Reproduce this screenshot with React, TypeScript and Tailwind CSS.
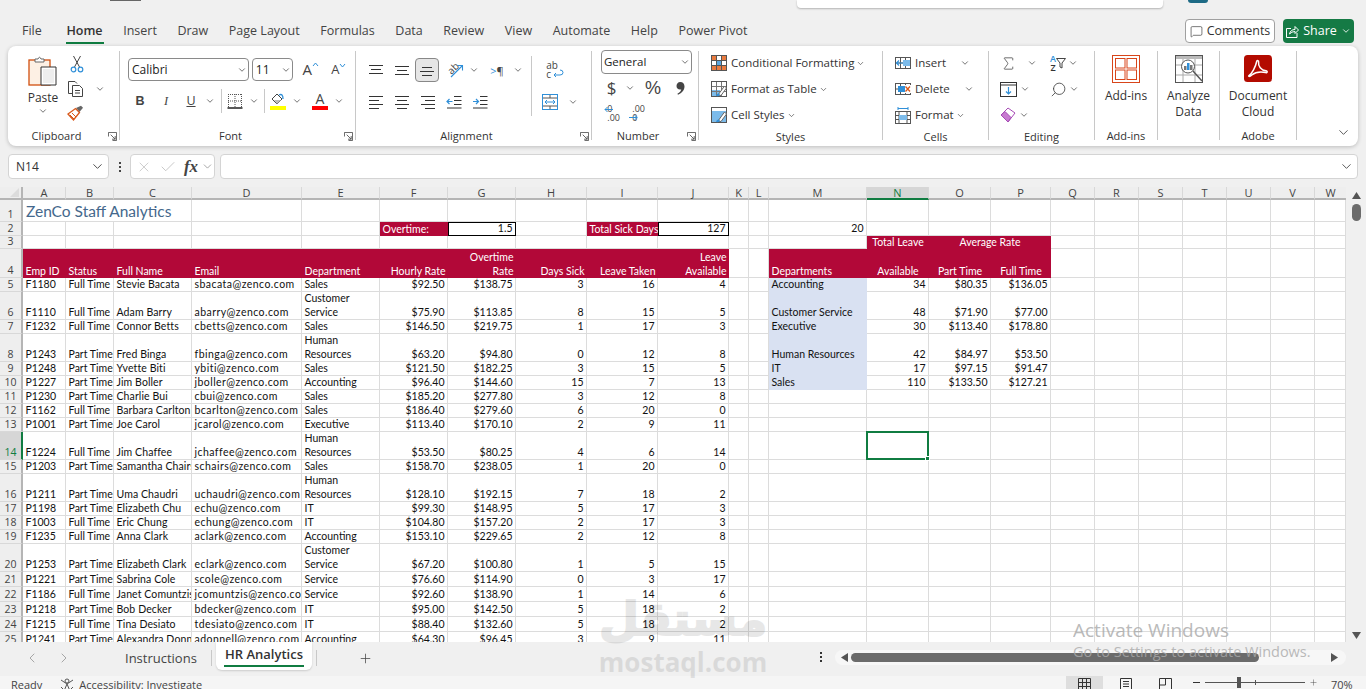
import { ChevronDown, ChevronLeft, ChevronRight, Check, Plus, X, MessageSquare, Search, Sigma } from 'lucide-react'

type CellSpec = { t?: string; right?: boolean; center?: boolean; fill?: 'red' | 'blue'; box?: boolean; span?: string; selected?: boolean; track?: string }

const COLS = 'ABCDEFGHIJKLMNOPQRSTUVW'.split('')
const ROW_NUMS = Array.from({ length: 25 }, (_, i) => i + 1)

// name, status, id etc. in sheet order, from row 5 down
const STAFF: [string, string, string, string, string, string, string, string, string, string][] = [
  ['F1180', 'Full Time', 'Stevie Bacata', 'sbacata@zenco.com', 'Sales', '$92.50', '$138.75', '3', '16', '4'],
  ['F1110', 'Full Time', 'Adam Barry', 'abarry@zenco.com', 'Customer\nService', '$75.90', '$113.85', '8', '15', '5'],
  ['F1232', 'Full Time', 'Connor Betts', 'cbetts@zenco.com', 'Sales', '$146.50', '$219.75', '1', '17', '3'],
  ['P1243', 'Part Time', 'Fred Binga', 'fbinga@zenco.com', 'Human\nResources', '$63.20', '$94.80', '0', '12', '8'],
  ['P1248', 'Part Time', 'Yvette Biti', 'ybiti@zenco.com', 'Sales', '$121.50', '$182.25', '3', '15', '5'],
  ['P1227', 'Part Time', 'Jim Boller', 'jboller@zenco.com', 'Accounting', '$96.40', '$144.60', '15', '7', '13'],
  ['P1230', 'Part Time', 'Charlie Bui', 'cbui@zenco.com', 'Sales', '$185.20', '$277.80', '3', '12', '8'],
  ['F1162', 'Full Time', 'Barbara Carlton', 'bcarlton@zenco.com', 'Sales', '$186.40', '$279.60', '6', '20', '0'],
  ['P1001', 'Part Time', 'Joe Carol', 'jcarol@zenco.com', 'Executive', '$113.40', '$170.10', '2', '9', '11'],
  ['F1224', 'Full Time', 'Jim Chaffee', 'jchaffee@zenco.com', 'Human\nResources', '$53.50', '$80.25', '4', '6', '14'],
  ['P1203', 'Part Time', 'Samantha Chairs', 'schairs@zenco.com', 'Sales', '$158.70', '$238.05', '1', '20', '0'],
  ['P1211', 'Part Time', 'Uma Chaudri', 'uchaudri@zenco.com', 'Human\nResources', '$128.10', '$192.15', '7', '18', '2'],
  ['P1198', 'Part Time', 'Elizabeth Chu', 'echu@zenco.com', 'IT', '$99.30', '$148.95', '5', '17', '3'],
  ['F1003', 'Full Time', 'Eric Chung', 'echung@zenco.com', 'IT', '$104.80', '$157.20', '2', '17', '3'],
  ['F1235', 'Full Time', 'Anna Clark', 'aclark@zenco.com', 'Accounting', '$153.10', '$229.65', '2', '12', '8'],
  ['P1253', 'Part Time', 'Elizabeth Clark', 'eclark@zenco.com', 'Customer\nService', '$67.20', '$100.80', '1', '5', '15'],
  ['P1221', 'Part Time', 'Sabrina Cole', 'scole@zenco.com', 'Service', '$76.60', '$114.90', '0', '3', '17'],
  ['F1186', 'Full Time', 'Janet Comuntzis', 'jcomuntzis@zenco.com', 'Service', '$92.60', '$138.90', '1', '14', '6'],
  ['P1218', 'Part Time', 'Bob Decker', 'bdecker@zenco.com', 'IT', '$95.00', '$142.50', '5', '18', '2'],
  ['F1215', 'Full Time', 'Tina Desiato', 'tdesiato@zenco.com', 'IT', '$88.40', '$132.60', '5', '18', '2'],
  ['P1241', 'Part Time', 'Alexandra Donnell', 'adonnell@zenco.com', 'Accounting', '$64.30', '$96.45', '3', '9', '11'],
]

const DEPTS: [string, string, string, string][] = [
  ['Accounting', '34', '$80.35', '$136.05'],
  ['Customer Service', '48', '$71.90', '$77.00'],
  ['Executive', '30', '$113.40', '$178.80'],
  ['Human Resources', '42', '$84.97', '$53.50'],
  ['IT', '17', '$97.15', '$91.47'],
  ['Sales', '110', '$133.50', '$127.21'],
]

const HEAD_4: Record<string, CellSpec> = {
  A: { t: 'Emp ID' }, B: { t: 'Status' }, C: { t: 'Full Name' }, D: { t: 'Email' }, E: { t: 'Department' },
  F: { t: 'Hourly Rate', right: true }, G: { t: 'Overtime\nRate', right: true }, H: { t: 'Days Sick', right: true },
  I: { t: 'Leave Taken', right: true }, J: { t: 'Leave\nAvailable', right: true },
}

function cellAt(col: string, row: number): CellSpec | null {
  if (row === 1 && col === 'A') return { t: 'ZenCo Staff Analytics', span: 'title' }
  if (row === 1 && (col === 'B' || col === 'C')) return null
  if (row === 2) {
    if (col === 'F') return { t: 'Overtime:', fill: 'red' }
    if (col === 'G') return { t: '1.5', right: true, box: true }
    if (col === 'I') return { t: 'Total Sick Days', fill: 'red' }
    if (col === 'J') return { t: '127', right: true, box: true }
    if (col === 'M') return { t: '20', right: true }
  }
  if (row === 3) {
    if (col === 'N') return { t: 'Total Leave', fill: 'red', center: true }
    if (col === 'O') return { t: 'Average Rate', fill: 'red', center: true, span: 'two' }
    if (col === 'P') return null
  }
  if (row === 4) {
    if (HEAD_4[col]) return { ...HEAD_4[col], fill: 'red' }
    if (col === 'M') return { t: 'Departments', fill: 'red' }
    if (col === 'N') return { t: 'Available', fill: 'red', center: true }
    if (col === 'O') return { t: 'Part Time', fill: 'red', center: true }
    if (col === 'P') return { t: 'Full Time', fill: 'red', center: true }
  }
  if (row >= 5) {
    const ci = COLS.indexOf(col)
    if (ci < 10) {
      return { t: STAFF[row - 5][ci], right: ci >= 5, track: ci === 3 ? 'tracking-[0.45px]' : ci === 2 ? 'tracking-[0.1px]' : '' }
    }
    const dept = DEPTS[row - 5]
    if (dept) {
      if (col === 'M') return { t: dept[0], fill: 'blue' }
      if (col === 'N') return { t: dept[1], right: true }
      if (col === 'O') return { t: dept[2], right: true }
      if (col === 'P') return { t: dept[3], right: true }
    }
    if (col === 'N' && row === 14) return { selected: true }
  }
  return {}
}

function Cell({ spec }: { spec: CellSpec }) {
  const isTitle = spec.span === 'title'
  return (
    <div
      className={`relative flex overflow-hidden whitespace-pre leading-[14px] font-['Lato',sans-serif] ${
        isTitle ? 'col-span-3 items-center border-r border-b border-[#dcdcdc] pl-[3px] text-[15.5px] text-[#44688c]' : 'items-end px-[2.5px] text-[10.5px]'
      } ${spec.span === 'two' ? 'col-span-2' : ''} ${spec.right ? 'justify-end text-right' : ''} ${spec.center ? 'justify-center text-center' : ''} ${
        spec.fill === 'red'
          ? 'bg-[#b20838] text-white'
          : spec.fill === 'blue'
            ? 'border-b border-[#d9e1f2] bg-[#d9e1f2] text-[#111]'
            : spec.box
              ? 'z-10 border border-black bg-white text-[#111]'
              : isTitle
                ? ''
                : 'border-r border-b border-[#dcdcdc] text-[#111]'
      } ${spec.track ?? ''} ${spec.selected ? '!overflow-visible' : ''}`}
    >
      {spec.t}
      {spec.selected && (
        <span className="absolute -top-px -right-px -bottom-px -left-px z-20 border-2 border-[#107c41]">
          <span className="absolute -right-[3px] -bottom-[3px] h-[5px] w-[5px] border border-white bg-[#107c41]" />
        </span>
      )}
    </div>
  )
}

function Sheet() {
  return (
    <div className="grid h-[455px] w-[1346px] grid-cols-[23px_43px_48px_78px_110px_78px_68px_68px_71px_71px_71px_20px_20px_98px_62px_62px_60px_44px_44px_44px_44px_44px_44px_31px] grid-rows-[13px_22px_14px_13px_29px_14px_28px_14px_28px_14px_14px_14px_14px_14px_28px_14px_28px_14px_14px_14px_28px_15px_15px_15px_15px_15px] overflow-hidden bg-white">
      <div className="flex items-center justify-end border-r-2 border-b-2 border-[#b5b5b5] bg-[#eeeeee] pr-[2px]">
        <svg width="9" height="9" viewBox="0 0 9 9"><path d="M9 0V9H0Z" fill="#dcdcdc" /></svg>
      </div>
      {COLS.map((c) => (
        <div
          key={c}
          className={`flex items-center justify-center border-b-2 text-[11px] leading-none ${
            c === 'N' ? 'border-[#107c41] bg-[#d6d6d6] text-[#107c41]' : 'border-[#b5b5b5] bg-[#eeeeee] text-[#444]'
          } ${c === 'W' ? '' : 'border-r border-r-[#d8d8d8]'}`}
        >
          {c}
        </div>
      ))}
      {ROW_NUMS.flatMap((r) => [
        <div
          key={`h${r}`}
          className={`flex items-end justify-center border-b border-b-[#d8d8d8] text-[10.5px] leading-[14px] ${
            r === 14 ? 'border-r-2 border-r-[#107c41] bg-[#d6d6d6] text-[#107c41]' : 'border-r-2 border-r-[#b5b5b5] bg-[#eeeeee] text-[#444]'
          }`}
        >
          {r}
        </div>,
        ...COLS.map((c) => {
          const spec = cellAt(c, r)
          return spec ? <Cell key={`${c}${r}`} spec={spec} /> : null
        }),
      ])}
    </div>
  )
}

function Chev({ size = 10 }: { size?: number }) {
  return <ChevronDown size={size} strokeWidth={1.8} className="shrink-0 text-[#444]" />
}

function InlineChev() {
  return <ChevronDown size={9} strokeWidth={1.8} className="-ml-[2px] shrink-0 text-[#444]" />
}

function Launcher() {
  return (
    <svg width="9" height="9" viewBox="0 0 10 10" className="absolute top-[6px] right-[2px]" fill="none" stroke="#555">
      <path d="M.5 5V.5H9.5V9.5H5" />
      <path d="M3 3 8 8M8 4.5V8H4.5" />
    </svg>
  )
}

function Group({ w, label, launcher, children }: { w: string; label?: string; launcher?: boolean; children: React.ReactNode }) {
  return (
    <div className={`flex h-full ${w}`}>
      <div className="flex min-w-0 flex-1 flex-col">
        <div className="flex-1">{children}</div>
        <div className={`relative flex h-[20px] items-center justify-center pt-[1px] text-[11px] text-[#333] ${launcher ? 'pr-[14px]' : ''}`}>
          {label}
          {launcher && <Launcher />}
        </div>
      </div>
      <span className="mt-[5px] mb-[6px] w-px bg-[#c8c8c8]" />
    </div>
  )
}

function Sep({ className = '' }: { className?: string }) {
  return <span className={`w-px self-stretch bg-[#c8c8c8] ${className}`} />
}

function Lines({ rows }: { rows: [number, number, number][] }) {
  return (
    <svg width="16" height="14" viewBox="0 0 16 14" stroke="#333">
      {rows.map(([a, b, y]) => (
        <line key={y} x1={a} x2={b} y1={y + 0.5} y2={y + 0.5} />
      ))}
    </svg>
  )
}

function PasteIcon() {
  return (
    <svg width="30" height="32" viewBox="0 0 30 32" fill="none">
      <rect x="1" y="5" width="21" height="25" fill="#fdf0e4" stroke="#d24f0f" strokeWidth="1.3" />
      <path d="M7 7V4H10Q11.5 .5 13 4H16V7Z" fill="#fff" stroke="#666" />
      <path d="M13 12H28V30H13Z" fill="#fff" stroke="#333" />
      <path d="M15 14H26V28H15Z" fill="#eeeeee" />
    </svg>
  )
}

function ScissorsIcon() {
  return (
    <svg width="14" height="18" viewBox="0 0 14 18" fill="none">
      <path d="M3.5 1 9.5 12M10.5 1 4.5 12" stroke="#444" />
      <circle cx="3.5" cy="14.5" r="2.3" stroke="#2f8fd8" strokeWidth="1.2" />
      <circle cx="10.5" cy="14.5" r="2.3" stroke="#2f8fd8" strokeWidth="1.2" />
    </svg>
  )
}

function CopyIcon() {
  return (
    <svg width="18" height="18" viewBox="0 0 18 18" fill="none" stroke="#444">
      <path d="M5 13.5H1.5V1.5H8L10 3.5" />
      <path d="M5.5 5.5H12.5L15.5 8.5V16.5H5.5Z" fill="#fff" />
      <path d="M8 10.5H13M8 13H13" />
    </svg>
  )
}

function BrushIcon() {
  return (
    <svg width="17" height="16" viewBox="0 0 17 16" fill="none">
      <path d="M9 3 14 0.8 16 2.8 12.5 7Z" fill="#666" />
      <path d="M1 9 8.5 3.5 12.5 7.5 6.5 15Z" fill="#fff" stroke="#d8581a" strokeWidth="1.3" />
      <path d="M3 10 7 14M5 8 9 12" stroke="#d8581a" />
    </svg>
  )
}

function BordersIcon() {
  return (
    <svg width="16" height="16" viewBox="0 0 16 16" fill="none">
      <path d="M1 1.5H15M1 8H15M1.5 1V14M8 1V14M14.5 1V14" stroke="#555" strokeDasharray="1 1" />
      <path d="M.5 15H15.5" stroke="#111" strokeWidth="1.4" />
    </svg>
  )
}

function FillIcon() {
  return (
    <svg width="16" height="18" viewBox="0 0 16 18" fill="none">
      <path d="M2 7 7 2 12 7 7 12Z" stroke="#444" />
      <path d="M4 8H11L7 12Z" fill="#bbb" />
      <path d="M9 3Q13 1 13 7" stroke="#2f8fd8" strokeWidth="1.3" />
      <rect y="14" width="16" height="4" fill="#ffff00" />
    </svg>
  )
}

function OrientIcon() {
  return (
    <span className="relative flex h-[18px] w-[18px] items-center justify-center">
      <span className="-mt-[5px] -ml-[4px] -rotate-45 text-[10px] leading-none text-[#444]">ab</span>
      <svg width="18" height="18" viewBox="0 0 18 18" fill="none" className="absolute inset-0">
        <path d="M5 16 16 5M11.5 4.5H16.5V9.5" stroke="#2f8fd8" strokeWidth="1.1" />
      </svg>
    </span>
  )
}

function IndentIcon({ dir }: { dir: 'out' | 'in' }) {
  return (
    <svg width="16" height="14" viewBox="0 0 16 14" fill="none">
      <path d="M8 1.5H15.5M8 5.5H15.5M8 9.5H15.5M1 13H15.5" stroke="#333" />
      {dir === 'out' ? (
        <path d="M6.5 6.5H1M3.5 4 1 6.5 3.5 9" stroke="#2f8fd8" strokeWidth="1.2" />
      ) : (
        <path d="M1 6.5H6.5M4 4 6.5 6.5 4 9" stroke="#2f8fd8" strokeWidth="1.2" />
      )}
    </svg>
  )
}

function MergeIcon() {
  return (
    <svg width="16" height="16" viewBox="0 0 16 16" fill="none">
      <rect x=".5" y=".5" width="15" height="15" stroke="#2f8fd8" />
      <path d="M1 4H15M1 12H15M8 1V4M8 12V15" stroke="#555" />
      <path d="M3 8H13M5 6 3 8 5 10M11 6 13 8 11 10" stroke="#2f8fd8" />
    </svg>
  )
}

function CommaIcon() {
  return (
    <svg width="9" height="13" viewBox="0 0 9 13">
      <path d="M4.2 0C7 0 8.5 2 8.5 4.5 8.5 8 6 11 2 12.8L1.4 11.8C3.8 10.3 5 8.8 5.3 7.4 2.5 8.2.5 6.3.5 4 .5 1.7 2 0 4.2 0Z" fill="#444" />
    </svg>
  )
}

function CondIcon() {
  return (
    <svg width="16" height="16" viewBox="0 0 16 16" fill="none">
      <rect x=".5" y=".5" width="15" height="15" stroke="#555" />
      <rect x="1" y="1" width="4" height="4" fill="#e97b3f" />
      <rect x="11" y="1" width="4" height="4" fill="#e97b3f" />
      <rect x="1" y="11" width="14" height="4" fill="#e97b3f" />
      <rect x="5" y="5.5" width="5" height="5" fill="#5aa7e0" />
      <path d="M5.5 1V15M10.5 1V15M1 5.5H15M1 10.5H15" stroke="#555" />
    </svg>
  )
}

function TableIcon({ filled }: { filled?: boolean }) {
  return (
    <svg width="16" height="16" viewBox="0 0 16 16" fill="none">
      <rect x=".5" y=".5" width="15" height="15" stroke="#555" />
      {filled ? <rect x="1" y="4" width="14" height="11" fill="#7cbbea" /> : <rect x="1" y="9" width="8" height="6" fill="#7cbbea" />}
      {!filled && <path d="M5.5 1V15M10.5 1V15M1 5.5H15M1 10.5H15" stroke="#777" />}
      <path d="M7 14 13.5 5 15.5 7 10 14.5Z" fill="#fff" stroke="#666" />
      <path d="M5 15Q5.5 12 8 12.5L9 14Q8 15.5 5 15Z" fill="#2f8fd8" />
    </svg>
  )
}

function InsertIcon() {
  return (
    <svg width="16" height="16" viewBox="0 0 16 16" fill="none">
      <rect x=".5" y="2.5" width="15" height="11" stroke="#555" />
      <path d="M5.5 2V14M10.5 2V14M1 8H15" stroke="#555" />
      <rect x="8" y="5" width="7" height="6" fill="#7cbbea" />
      <path d="M8 8H1.5M4 5.5 1.5 8 4 10.5" stroke="#2f8fd8" strokeWidth="1.2" />
    </svg>
  )
}

function DeleteIcon() {
  return (
    <svg width="16" height="16" viewBox="0 0 16 16" fill="none">
      <rect x=".5" y="2.5" width="15" height="11" stroke="#555" />
      <path d="M5.5 2V14M10.5 2V14M1 8H15" stroke="#555" />
      <rect x="3" y="5" width="7" height="6" fill="#2f8fd8" />
      <rect x="10" y="4" width="6" height="8" fill="#fff" />
      <path d="M10.5 5.5 15 10.5M15 5.5 10.5 10.5" stroke="#d8581a" strokeWidth="1.3" />
    </svg>
  )
}

function FormatIcon() {
  return (
    <svg width="16" height="17" viewBox="0 0 16 17" fill="none">
      <path d="M3 1.5H13M3 0V3M13 0V3" stroke="#2f8fd8" />
      <rect x=".5" y="4.5" width="15" height="12" stroke="#555" />
      <path d="M1 8.5H15M1 12.5H15M4 5V16M12 5V16" stroke="#555" />
      <rect x="4" y="8" width="8" height="5" fill="#7cbbea" />
    </svg>
  )
}

function FillDownIcon() {
  return (
    <svg width="17" height="15" viewBox="0 0 17 15" fill="none">
      <rect x=".5" y=".5" width="16" height="14" stroke="#333" />
      <path d="M1 3H16" stroke="#333" />
      <path d="M8.5 5V12M6 9.5 8.5 12 11 9.5" stroke="#2f8fd8" strokeWidth="1.2" />
    </svg>
  )
}

function EraserIcon() {
  return (
    <svg width="16" height="16" viewBox="0 0 16 16" fill="none">
      <path d="M1 8 8 1 15 6 8 15Z" fill="#fff" stroke="#a64ab5" />
      <path d="M1 8 5 4.5 11 10.5 8 15Z" fill="#c77bd0" stroke="#a64ab5" />
    </svg>
  )
}

function SortIcon() {
  return (
    <span className="flex items-center">
      <span className="flex flex-col text-center text-[9px] font-semibold leading-[9px]">
        <span className="text-[#2f8fd8]">A</span>
        <span className="text-[#333]">Z</span>
      </span>
      <svg width="10" height="11" viewBox="0 0 10 11" fill="none" stroke="#444">
        <path d="M.5 .5H9.5L6 5V10L4 9V5Z" />
      </svg>
    </span>
  )
}

function AddInsIcon() {
  return (
    <svg width="28" height="28" viewBox="0 0 28 28" fill="none" stroke="#d8451a">
      <rect x=".5" y=".5" width="27" height="27" />
      <rect x="3.5" y="3.5" width="9.5" height="9.5" />
      <rect x="15" y="3.5" width="9.5" height="9.5" />
      <rect x="3.5" y="15" width="9.5" height="9.5" />
      <rect x="15" y="15" width="9.5" height="9.5" />
    </svg>
  )
}

function AnalyzeIcon() {
  return (
    <svg width="28" height="28" viewBox="0 0 28 28" fill="none">
      <rect x=".5" y=".5" width="27" height="27" stroke="#555" />
      <rect x="1" y="1" width="26" height="3" fill="#bbb" />
      <path d="M1 10H27M1 20H27M8 4V27M20 4V27" stroke="#aaa" />
      <circle cx="13" cy="11.5" r="6.5" fill="#fff" stroke="#555" />
      <path d="M18 16 27 26" stroke="#555" strokeWidth="1.4" />
      <rect x="9" y="11" width="2.5" height="4" fill="#777" />
      <rect x="12" y="8" width="2.5" height="7" fill="#2f8fd8" />
      <rect x="15" y="10" width="2.5" height="5" fill="#777" />
    </svg>
  )
}

function PdfIcon() {
  return (
    <svg width="28" height="27" viewBox="0 0 28 27">
      <rect width="28" height="27" rx="3.5" fill="#b30b00" />
      <path
        d="M5 20.5C8 18.5 11.5 12 12.7 6.5 13 5 15 5.5 14.6 7.2 14 11 17 15.2 22 15.8 23.8 16 23.5 18 21.6 17.6 16 16.5 11 17.5 7.8 20 5.8 22 3.8 21.5 5 20.5Z"
        fill="none"
        stroke="#fff"
        strokeWidth="1.5"
      />
    </svg>
  )
}

function Ribbon() {
  return (
    <div className="mx-[8px] flex h-[100px] w-[1350px] rounded-lg bg-white shadow-[0_1px_4px_rgba(0,0,0,0.22)]">
      <Group w="w-[112px]" label="Clipboard" launcher>
        <div className="flex pt-[9px] pl-[19px]">
          <div className="flex w-[32px] flex-col items-center">
            <PasteIcon />
            <span className="mt-[3px] text-[12px] leading-[16px] text-[#333]">Paste</span>
            <span><Chev /></span>
          </div>
          <div className="ml-[8px] flex flex-col items-start gap-[7px]">
            <span className="ml-[3px]"><ScissorsIcon /></span>
            <span className="flex items-center gap-[10px]"><CopyIcon /><Chev /></span>
            <span><BrushIcon /></span>
          </div>
        </div>
      </Group>
      <Group w="w-[236px]" label="Font" launcher>
        <div className="mt-[12px] flex h-[23px] items-center gap-[3px] pl-[8px]">
          <span className="flex h-[23px] w-[122px] items-center justify-between rounded border border-[#8a8a8a] pr-[1px] pl-[3px] text-[12px] text-[#222]">Calibri<Chev /></span>
          <span className="flex h-[23px] w-[42px] items-center justify-between rounded border border-[#8a8a8a] pr-[1px] pl-[3px] text-[12px] text-[#222]">11<Chev /></span>
          <span className="ml-[6px] flex w-[24px] items-start text-[15px] leading-none text-[#444]">A<svg width="7" height="5" viewBox="0 0 7 5" fill="none" stroke="#2f8fd8"><path d="M1 4 3.5 1 6 4" /></svg></span>
          <span className="ml-[2px] flex w-[24px] items-start text-[13px] leading-none text-[#444]">A<svg width="7" height="5" viewBox="0 0 7 5" fill="none" stroke="#2f8fd8"><path d="M1 1 3.5 4 6 1" /></svg></span>
        </div>
        <div className="mt-[8px] flex h-[24px] items-center pl-[7px] text-[#444]">
          <span className="w-[26px] text-center text-[12.5px] font-bold font-['Liberation_Sans',sans-serif]">B</span>
          <span className="w-[26px] text-center text-[12.5px] italic font-['Liberation_Serif',serif]">I</span>
          <span className="w-[24px] text-center text-[12.5px] underline">U</span>
          <span className="flex w-[14px] justify-center"><Chev /></span>
          <Sep className="ml-[4px]" />
          <span className="flex w-[26px] justify-center"><BordersIcon /></span>
          <span className="flex w-[12px] justify-center"><Chev /></span>
          <Sep className="ml-[4px]" />
          <span className="flex w-[26px] justify-center"><FillIcon /></span>
          <span className="flex w-[12px] justify-center"><Chev /></span>
          <span className="ml-[5px] flex h-[18px] w-[24px] flex-col items-center"><span className="text-[14px] leading-[14px] text-[#444]">A</span><span className="h-[4px] w-[16px] bg-[#ff0000]" /></span>
          <span className="flex w-[14px] justify-center"><Chev /></span>
        </div>
      </Group>
      <Group w="w-[236px]" label="Alignment" launcher>
        <div className="flex h-[80px]">
          <div className="pl-[7px]">
            <div className="mt-[12px] flex h-[24px] items-center">
              <span className="flex w-[26px] justify-center"><Lines rows={[[1, 15, 2], [3, 13, 6], [1, 15, 10]]} /></span>
              <span className="flex w-[26px] justify-center"><Lines rows={[[1, 15, 3], [3, 13, 7], [1, 15, 11]]} /></span>
              <span className="flex h-[24px] w-[24px] items-center justify-center rounded border border-[#888] bg-[#e6e6e6]"><Lines rows={[[3, 13, 4], [1, 15, 8], [3, 13, 12]]} /></span>
              <span className="ml-[3px] flex w-[26px] justify-center"><OrientIcon /></span>
              <span className="flex w-[12px] justify-center"><Chev /></span>
              <span className="ml-[4px] flex w-[26px] justify-center text-[11px] leading-none text-[#444]"><span className="text-[#2f8fd8]">&gt;</span>¶</span>
              <span className="flex w-[16px] justify-center"><Chev /></span>
            </div>
            <div className="mt-[8px] flex h-[24px] items-center">
              <span className="flex w-[26px] justify-center"><Lines rows={[[1, 15, 1], [1, 11, 5], [1, 15, 9], [1, 11, 13]]} /></span>
              <span className="flex w-[26px] justify-center"><Lines rows={[[1, 15, 1], [3, 13, 5], [1, 15, 9], [3, 13, 13]]} /></span>
              <span className="flex w-[26px] justify-center"><Lines rows={[[1, 15, 1], [5, 15, 5], [1, 15, 9], [5, 15, 13]]} /></span>
              <span className="flex w-[26px] justify-center"><IndentIcon dir="out" /></span>
              <span className="flex w-[26px] justify-center"><IndentIcon dir="in" /></span>
            </div>
          </div>
          <Sep className="mt-[10px] mb-[10px] ml-[5px]" />
          <div className="pl-[10px]">
            <div className="mt-[12px] flex h-[24px] w-[20px] items-center justify-center">
              <span className="relative text-[10px] leading-[9px] text-[#444]">ab<br />c<svg className="absolute top-[8px] left-[7px]" width="11" height="9" viewBox="0 0 11 9" fill="none" stroke="#2f8fd8"><path d="M1 6H7Q10 6 10 3.5T7 1M3 4 1 6 3 8" /></svg></span>
            </div>
            <div className="mt-[8px] flex h-[24px] items-center">
              <MergeIcon />
              <span className="ml-[10px]"><Chev /></span>
            </div>
          </div>
        </div>
      </Group>
      <Group w="w-[107px]" label="Number" launcher>
        <div className="pl-[9px]">
          <span className="mt-[4px] flex h-[24px] w-[91px] items-center justify-between rounded border border-[#8a8a8a] pr-[1px] pl-[2px] text-[11.5px] text-[#222]">General<Chev /></span>
          <div className="mt-[2px] flex h-[24px] items-center text-[#444]">
            <span className="w-[21px] text-center text-[17px]">$</span>
            <span className="flex w-[16px] justify-center"><Chev /></span>
            <span className="ml-[3px] w-[24px] text-center text-[18px] font-['Liberation_Sans',sans-serif]">%</span>
            <span className="ml-[3px] flex w-[24px] justify-center"><CommaIcon /></span>
          </div>
          <div className="flex items-center gap-[9px] pt-[5px] pl-[3px]">
            <span className="relative flex h-[17px] w-[16px] flex-col items-end text-[9px] leading-[8.5px] text-[#444]">0<br />.00<svg className="absolute top-[1px] left-0" width="9" height="7" viewBox="0 0 9 7" fill="none" stroke="#2f8fd8"><path d="M9 3.5H1M3.5 1 1 3.5 3.5 6" /></svg></span>
            <span className="relative flex h-[17px] w-[16px] flex-col items-end text-[9px] leading-[8.5px] text-[#444]">.00<br />0<svg className="absolute bottom-[1px] left-0" width="9" height="7" viewBox="0 0 9 7" fill="none" stroke="#2f8fd8"><path d="M0 3.5H8M5.5 1 8 3.5 5.5 6" /></svg></span>
          </div>
        </div>
      </Group>
      <Group w="w-[184px]" label="Styles">
        <div className="flex flex-col pt-[4px] pl-[12px] text-[11.5px] text-[#333]">
          <span className="flex h-[26px] items-center gap-[4px]"><CondIcon />Conditional Formatting<InlineChev /></span>
          <span className="flex h-[26px] items-center gap-[4px]"><TableIcon />Format as Table<InlineChev /></span>
          <span className="flex h-[26px] items-center gap-[4px]"><TableIcon filled />Cell Styles<InlineChev /></span>
        </div>
      </Group>
      <Group w="w-[106px]" label="Cells">
        <div className="flex flex-col pt-[4px] pl-[12px] text-[11.5px] text-[#333]">
          <span className="flex h-[26px] w-[75px] items-center gap-[4px]"><InsertIcon />Insert<span className="ml-auto"><Chev /></span></span>
          <span className="flex h-[26px] w-[79px] items-center gap-[4px]"><DeleteIcon />Delete<span className="ml-auto"><Chev /></span></span>
          <span className="flex h-[26px] items-center gap-[4px]"><FormatIcon />Format<InlineChev /></span>
        </div>
      </Group>
      <Group w="w-[106px]" label="Editing">
        <div className="grid grid-cols-[50px_40px] pt-[4px] pl-[11px]">
          <span className="flex h-[26px] items-center gap-[10px]"><Sigma size={17} strokeWidth={1.1} className="text-[#444]" /><Chev /></span>
          <span className="flex h-[26px] items-center gap-[2px]"><SortIcon /><Chev /></span>
          <span className="flex h-[26px] items-center gap-[3px]"><FillDownIcon /><Chev /></span>
          <span className="flex h-[26px] items-center gap-[2px]"><Search size={17} strokeWidth={1.2} className="-scale-x-100 text-[#444]" /><Chev /></span>
          <span className="flex h-[26px] items-center gap-[3px]"><EraserIcon /><Chev /></span>
        </div>
      </Group>
      <Group w="w-[63px]" label="Add-ins">
        <div className="flex flex-col items-center pt-[9px] text-[12px] leading-[16px] text-[#333]">
          <AddInsIcon />
          <span className="mt-[5px]">Add-ins</span>
        </div>
      </Group>
      <Group w="w-[62px]">
        <div className="flex flex-col items-center pt-[9px] text-[12px] leading-[16px] text-[#333]">
          <AnalyzeIcon />
          <span className="mt-[5px] text-center">Analyze<br />Data</span>
        </div>
      </Group>
      <Group w="w-[77px]" label="Adobe">
        <div className="flex flex-col items-center pt-[9px] text-[12px] leading-[16px] text-[#333]">
          <PdfIcon />
          <span className="mt-[6px] text-center">Document<br />Cloud</span>
        </div>
      </Group>
      <div className="flex flex-1 items-end justify-end pr-[7px] pb-[6px]">
        <ChevronDown size={15} strokeWidth={1.4} className="text-[#444]" />
      </div>
    </div>
  )
}

function FormulaBar() {
  return (
    <div className="flex h-[41px] items-start px-[8px] pt-[8px]">
      <div className="flex h-[25px] w-[101px] items-center justify-between rounded border border-[#d4d4d4] bg-white pr-[3px] pl-[7px] text-[12px] text-[#333]">
        N14<ChevronDown size={15} strokeWidth={1.5} className="text-[#444]" />
      </div>
      <div className="flex h-[25px] w-[21px] flex-col items-center justify-center gap-[2px]">
        <span className="h-[2px] w-[2px] bg-[#444]" /><span className="h-[2px] w-[2px] bg-[#444]" /><span className="h-[2px] w-[2px] bg-[#444]" />
      </div>
      <div className="flex h-[25px] w-[85px] items-center rounded border border-[#d4d4d4] bg-white pl-[5px] text-[#b5b5b5]">
        <X size={16} strokeWidth={1} />
        <Check size={18} strokeWidth={1} className="ml-[7px]" />
        <span className="ml-[7px] font-['Liberation_Serif',serif] text-[17px] italic font-bold text-[#444]">fx</span>
        <ChevronDown size={13} strokeWidth={1.2} className="ml-[3px] text-[#777]" />
      </div>
      <div className="ml-[5px] flex h-[25px] flex-1 items-center justify-end rounded border border-[#d4d4d4] bg-white pr-[3px]">
        <ChevronDown size={15} strokeWidth={1.4} className="text-[#444]" />
      </div>
    </div>
  )
}

function TabBar() {
  return (
    <div className="flex h-[34px] items-start bg-[#f0f0f0]">
      <div className="flex h-[32px] w-[108px] items-center pl-[24px] text-[#9a9a9a]">
        <ChevronLeft size={16} strokeWidth={1.3} />
        <ChevronRight size={16} strokeWidth={1.3} className="ml-[16px]" />
      </div>
      <span className="flex h-[32px] w-[103px] items-center pl-[17px] pt-[1px] text-[13px] text-[#444]">Instructions</span>
      <span className="mt-[8px] h-[16px] w-px bg-[#c8c8c8]" />
      <div className="ml-[4px] flex h-[28px] w-[96px] flex-col items-center rounded-b-md bg-white shadow-[0_1px_2px_rgba(0,0,0,0.15)]">
        <span className="pt-[3px] text-[13px] font-semibold leading-[18px] text-[#333]">HR Analytics</span>
        <span className="mt-[2px] h-[2px] w-[80px] bg-[#107c41]" />
      </div>
      <span className="ml-[4px] mt-[8px] h-[16px] w-px bg-[#c8c8c8]" />
      <span className="ml-[41px] flex h-[32px] items-center text-[#444]"><Plus size={15} strokeWidth={1.2} /></span>
      <div className="ml-[447px] flex h-[30px] flex-col items-center justify-center gap-[2px]">
        <span className="h-[2px] w-[2px] bg-[#333]" /><span className="h-[2px] w-[2px] bg-[#333]" /><span className="h-[2px] w-[2px] bg-[#333]" />
      </div>
      <div className="mt-[8px] ml-[13px] flex h-[15px] w-[511px] items-center rounded-full bg-[#f7f7f7] px-[6px]">
        <svg width="7" height="9" viewBox="0 0 7 9"><path d="M7 0V9L0 4.5Z" fill="#555" /></svg>
        <span className="ml-[3px] h-[9px] w-[408px] rounded-full bg-[#6b6b6b]" />
        <svg width="7" height="9" viewBox="0 0 7 9" className="ml-auto mr-[2px]"><path d="M0 0V9L7 4.5Z" fill="#555" /></svg>
      </div>
    </div>
  )
}

function StatusBar() {
  return (
    <div className="flex h-[13px] items-start bg-[#f5f5f5] pl-[11px] text-[11px] leading-[18px] text-[#444]">
      <span>Ready</span>
      <svg width="14" height="13" viewBox="0 0 14 13" fill="none" stroke="#555" className="ml-[18px] mt-[2px]">
        <circle cx="7" cy="3" r="2" />
        <path d="M1 2 7 6 13 2M4 13 7 6 10 13M1 9 3 11M13 9 11 11" />
      </svg>
      <span className="ml-[5px]">Accessibility: Investigate</span>
      <div className="ml-auto flex h-[13px] items-start">
        <span className="flex h-[13px] w-[37px] justify-center bg-[#dedede] pt-[2px]">
          <svg width="13" height="13" viewBox="0 0 13 13" fill="none" stroke="#333"><path d="M.5 .5H12.5V13M.5 .5V13M4.5 0V13M8.5 0V13M0 4.5H13M0 8.5H13" /></svg>
        </span>
        <svg width="12" height="13" viewBox="0 0 12 13" fill="none" stroke="#333" className="ml-[17px] mt-[2px]"><path d="M.5 13V.5H11.5V13M3 3.5H9M3 6H9M3 8.5H9" /></svg>
        <svg width="13" height="13" viewBox="0 0 13 13" fill="none" stroke="#333" className="ml-[27px] mt-[2px]"><path d="M.5 13V.5H12.5V13M6.5 1V7H.5" /></svg>
        <span className="ml-[21px] mt-[6px] h-px w-[7px] bg-[#333]" />
        <span className="relative ml-[5px] mt-[6px] flex h-px w-[100px] bg-[#555]">
          <span className="absolute -top-[5px] left-[32px] h-[11px] w-[4px] bg-[#555]" />
          <span className="absolute -top-[2px] left-[50px] h-[5px] w-px bg-[#555]" />
        </span>
        <span className="ml-[4px] mt-[2px] flex"><Plus size={9} strokeWidth={1.2} /></span>
        <span className="ml-[13px] w-[35px]">70%</span>
      </div>
    </div>
  )
}

export default function App() {
  return (
    <div className="relative flex h-[689px] w-[1366px] flex-col overflow-hidden bg-[#f0f0f0] font-['Open_Sans','Noto_Sans',sans-serif]">
      {/* what is left of the title bar at the top edge */}
      <div className="flex h-[16px] items-start">
        <span className="ml-[110px] h-px w-[31px] bg-[#666]" />
        <span className="ml-[656px] h-[8px] w-[366px] rounded-b bg-white shadow-[0_1px_2px_rgba(0,0,0,0.25)]" />
        <span className="ml-[25px] h-[3px] w-[20px] rounded-b-full bg-[#1d6a85]" />
      </div>
      <div className="flex h-[30px] items-center pl-[22px] text-[12.5px] text-[#444]">
        <div className="flex gap-[20.6px] pt-[1px]">
          <span>File</span>
          <span className="relative ml-[4px] font-semibold text-[#333]">
            Home
            <span className="absolute -right-px -bottom-[3px] left-0 h-[2px] bg-[#107c41]" />
          </span>
          <span>Insert</span>
          <span>Draw</span>
          <span>Page Layout</span>
          <span>Formulas</span>
          <span>Data</span>
          <span>Review</span>
          <span>View</span>
          <span>Automate</span>
          <span>Help</span>
          <span>Power Pivot</span>
        </div>
        <div className="mr-[12px] ml-auto flex gap-[8px]">
          <span className="flex h-[24px] w-[90px] items-center justify-center gap-[4px] rounded border border-[#a0a0a0] bg-white text-[#333]">
            <MessageSquare size={13} strokeWidth={1.2} />Comments
          </span>
          <span className="flex h-[24px] w-[71px] items-center justify-center gap-[4px] rounded bg-[#157a45] text-white">
            <svg width="13" height="13" viewBox="0 0 13 13" fill="none" stroke="#fff"><path d="M5 3.5H.5V12.5H11V8" /><path d="M3.5 9Q4.5 4.5 9 4.5V1.5L12.5 5 9 8.5V6.5Q5.5 6.5 3.5 9Z" /></svg>
            Share<ChevronDown size={10} strokeWidth={2} />
          </span>
        </div>
      </div>
      <Ribbon />
      <FormulaBar />
      <div className="flex h-[455px]">
        <Sheet />
        <div className="flex w-[20px] flex-col items-center bg-[#f0f0f0] pt-[5px]">
          <svg width="9" height="7" viewBox="0 0 9 7"><path d="M4.5 0 9 7H0Z" fill="#555" /></svg>
          <span className="mt-[5px] h-[17px] w-[9px] rounded-full bg-[#6b6b6b]" />
          <svg width="9" height="7" viewBox="0 0 9 7" className="mt-auto mb-[3px]"><path d="M4.5 7 9 0H0Z" fill="#555" /></svg>
        </div>
      </div>
      <TabBar />
      <StatusBar />
      {/* watermarks lying over the page */}
      <div className="pointer-events-none absolute top-[590px] left-[600px] flex w-[166px] flex-col items-center text-black opacity-[0.09]">
        <span dir="rtl" className="font-['DejaVu_Sans',sans-serif] text-[46px] font-bold leading-[58px] [-webkit-text-stroke:2px_black]">مستقل</span>
        <span className="font-['Open_Sans',sans-serif] text-[26px] font-bold leading-[28px]">mostaql.com</span>
      </div>
      <div className="pointer-events-none absolute top-[618px] left-[1073px] text-[#aaaaaa] opacity-80">
        <div className="text-[19px] leading-[24px]">Activate Windows</div>
        <div className="mt-[1px] whitespace-nowrap text-[14.5px] leading-[18px]">Go to Settings to activate Windows.</div>
      </div>
    </div>
  )
}
